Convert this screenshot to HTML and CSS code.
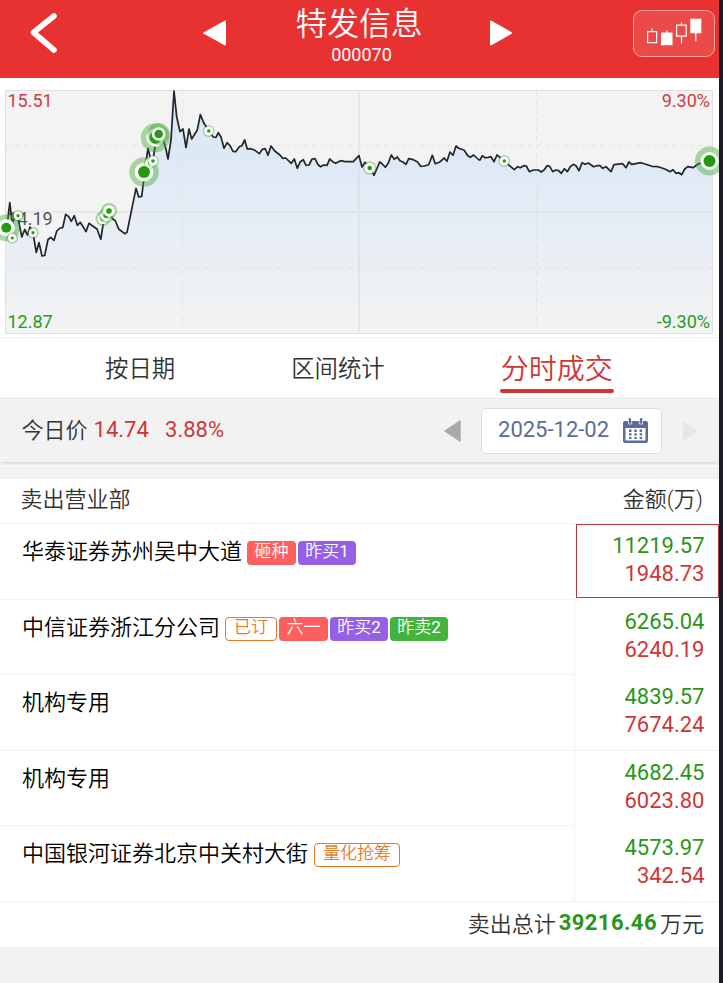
FILE: index.html
```html
<!DOCTYPE html>
<html lang="zh-CN">
<head>
<meta charset="utf-8">
<title>特发信息 000070</title>
<link rel="stylesheet" href="styles.css">
</head>
<body>
<div class="app">
  <header class="header">
    <svg class="back" width="32" height="46" viewBox="0 0 32 46"><path d="M27 6 6.500 22.500 27 40" fill="none" stroke="#fff" stroke-width="5.600" stroke-linecap="round" stroke-linejoin="round"/></svg>
    <svg class="prev" width="24" height="26" viewBox="0 0 24 26"><path d="M1.300 13 22 1.500v23z" fill="#fff" stroke="#fff" stroke-width="2" stroke-linejoin="round"/></svg>
    <div class="heading"><h1 class="title">特发信息</h1><div class="code">000070</div></div>
    <svg class="next" width="24" height="26" viewBox="0 0 24 26"><path d="M22 13 2 1.500v23z" fill="#fff" stroke="#fff" stroke-width="2" stroke-linejoin="round"/></svg>
    <div class="kline">
      <svg width="80" height="45" viewBox="1 1 80 45"><g fill="none" stroke="#fff" stroke-width="1.200"><path d="M14.600 22.600h9v11h-9zM19 19.500v3M33.800 21.500v3M43.600 16.100h9.600v11h-9.600zM48.500 13.500v2.600M48.500 27v7.500M62.800 23v9.300"/></g><path fill="#fff" d="M28 23.500h11.500v12.700H28zM57.300 9.700h11v14.500h-11z"/></svg>
    </div>
  </header>

  <section class="chart">
    <svg width="719" height="259" viewBox="0 78 719 259">
      <defs><linearGradient id="fill" x1="0" y1="91" x2="0" y2="333" gradientUnits="userSpaceOnUse"><stop offset="0" stop-color="#d6e5f5"/><stop offset=".4" stop-color="#e2ebf6"/><stop offset="1" stop-color="#f3f3f3"/></linearGradient></defs>
      <rect x="5.500" y="90.500" width="707" height="243" fill="#f3f3f3" stroke="#e0e0e0"/>
      <path id="area" fill="url(#fill)" d=""/>
      <g fill="none" stroke="#d2d6da" stroke-opacity=".5"><path stroke-width="2" stroke-opacity=".4" d="M6 212h706M359 91v242"/><path stroke-dasharray="4.500 4.500" d="M6 145.500h706M6 267.500h706M182.500 91v242M536.500 91v242"/></g>
      <g class="axis"><text x="7.500" y="107" fill="#cf3c3c">15.51</text><text x="7.500" y="225" fill="#555">14.19</text><text x="7.500" y="328" fill="#2b9a1a">12.87</text><text x="710" y="107" text-anchor="end" fill="#cf3c3c">9.30%</text><text x="710" y="328" text-anchor="end" fill="#2b9a1a">-9.30%</text></g>
      <path id="line" fill="none" stroke="#20262a" stroke-width="1.700" stroke-linejoin="round" d=""/>
      <g id="markers"></g>
    </svg>
  </section>

  <nav class="tabs"><a class="tab">按日期</a><a class="tab">区间统计</a><a class="tab active">分时成交</a></nav>

  <section class="pricebar">
    <span class="label">今日价</span><span class="price">14.74</span><span class="change">3.88%</span>
    <svg class="day-prev" width="18" height="24" viewBox="0 0 18 24"><path d="M1 12 16 2v20z" fill="#aaa" stroke="#aaa" stroke-width="1.500" stroke-linejoin="round"/></svg>
    <div class="date"><span>2025-12-02</span>
      <svg width="25" height="26" viewBox="0 0 25 26"><path fill="#5b6b9c" d="M2 3h3.500V1.200q0-1.200 1.300-1.200t1.300 1.200V3h8.800V1.200q0-1.200 1.300-1.200t1.300 1.200V3H23q2 0 2 2v18q0 2-2 2H2q-2 0-2-2V5q0-2 2-2z"/><path fill="#fff" d="M2.500 10h20v12.500h-20z"/><path d="M5.500 2v4h3.200V2M16.300 2v4h3.200V2" fill="none" stroke="#fff" stroke-width=".7"/><path fill="#5b6b9c" d="M6 11.500h2.500v2.500H6zM11.300 11.500h2.500v2.500h-2.500zM16.600 11.500h2.500v2.500h-2.500zM6 15.300h2.500v2.200H6zM11.300 15.300h2.500v2.200h-2.500zM16.600 15.300h2.500v2.200h-2.500zM6 18.900h2.500v2.200H6zM11.300 18.900h2.500v2.200h-2.500zM16.600 18.900h2.500v2.200h-2.500z"/></svg>
    </div>
    <svg class="day-next" width="18" height="24" viewBox="0 0 18 24"><path d="M17 12 2 2v20z" fill="#e6e6e6"/></svg>
  </section>
  <div class="divider"></div>

  <section class="table">
    <div class="thead"><span>卖出营业部</span><span>金额(万)</span></div>
    <div class="row"><div class="broker"><span>华泰证券苏州吴中大道</span><b class="tag red">砸种</b><b class="tag purple">昨买<i>1</i></b></div><div class="amount selected"><span class="sell">11219.57</span><span class="buy">1948.73</span></div></div>
    <div class="row"><div class="broker"><span>中信证券浙江分公司</span><b class="tag outline booked">已订</b><b class="tag red">六一</b><b class="tag purple">昨买<i>2</i></b><b class="tag green">昨卖<i>2</i></b></div><div class="amount"><span class="sell">6265.04</span><span class="buy">6240.19</span></div></div>
    <div class="row"><div class="broker"><span>机构专用</span></div><div class="amount ruled"><span class="sell">4839.57</span><span class="buy">7674.24</span></div></div>
    <div class="row"><div class="broker"><span>机构专用</span></div><div class="amount"><span class="sell">4682.45</span><span class="buy">6023.80</span></div></div>
    <div class="row"><div class="broker"><span>中国银河证券北京中关村大街</span><b class="tag outline strategy">量化抢筹</b></div><div class="amount ruled"><span class="sell">4573.97</span><span class="buy">342.54</span></div></div>
    <div class="total"><span>卖出总计</span><strong>39216.46</strong><span>万元</span></div>
  </section>
</div>
<script src="chart.js"></script>
</body>
</html>
```
FILE: styles.css
```css
* { box-sizing: border-box; }
body { margin: 0; background: #1b1b28; font-family: Roboto, "Noto Sans CJK SC", sans-serif; color: #333; }
.app { width: 719px; height: 983px; background: #f2f2f2; overflow: hidden; }
svg { display: block; flex: none; }
h1 { margin: 0; font-weight: 350; }

.header { height: 78px; background: #e83131; color: #fff; display: flex; align-items: flex-start; }
.back { margin: 10px 0 0 27px; }
.prev { margin: 19.500px 0 0 144px; }
.heading { width: 128px; margin-left: 68px; display: flex; flex-direction: column; align-items: center; }
.title { font-size: 31.800px; line-height: 46px; white-space: nowrap; padding-top: 1px; }
.code { font-size: 18px; line-height: 20px; margin: -2px 0 0 5px; }
.next { margin: 19.500px 0 0 66px; }
.kline { width: 82px; height: 47px; margin: 9.500px 0 0 120px; border: 1px solid #f5a5a5; border-radius: 9px; background: #ec4949; overflow: hidden; }
.kline svg { margin-top: -1px; }

.chart { height: 259px; background: #fff; }
.axis { font-size: 18px; }
.ring { fill: #3da72f; fill-opacity: .42; }
.disc { fill: #fff; }
.dot { fill: #249a0e; }

.tabs { height: 61px; background: #fff; border-top: 1px solid #f3f3f3; display: flex; align-items: flex-start; font-weight: 350; }
.tab { font-size: 23.400px; line-height: 34px; margin: 14px 0 0 105px; white-space: nowrap; }
.tab + .tab { margin-left: 116px; }
.tab.active { color: #d03535; font-size: 28px; line-height: 40px; height: 43px; width: 114px; padding-left: 1px; margin: 12px 0 0 115px; position: relative; }
.tab.active::after { content: ""; position: absolute; left: 0; right: 0; bottom: 0; height: 4px; border-radius: 2px; background: #d03535; }

.pricebar { height: 64px; background: #f2f2f2; border-top: 1px solid #e9e9e9; box-shadow: 0 2px 4px rgba(0,0,0,.18); display: flex; align-items: center; font-size: 22px; position: relative; }
.label { margin: 0 6px 0 21.500px; padding-bottom: 5px; font-weight: 350; }
.price, .change { color: #cf3535; padding-bottom: 3px; }
.price { width: 71.500px; }
.change { width: 60px; }
.day-prev { margin: 1px 0 0 219px; }
.date { width: 181px; height: 46px; margin: 0 0 0 19px; padding: 0 13px 0 16px; display: flex; align-items: center; justify-content: space-between; background: #fff; border: 1px solid #ddd; border-radius: 5px; color: #5b6b9c; }
.date span { padding-bottom: 3px; }
.day-next { margin: 1px 0 0 19px; }
.divider { height: 17px; background: #f2f2f2; border-top: 5px solid #fff; }

.table { height: 468px; background: #fff; font-size: 22px; }
.thead { height: 45px; padding: 0 16px 8px 20.500px; display: flex; justify-content: space-between; align-items: center; border-bottom: 1px solid #f2f2f2; font-weight: 350; }
.row { height: 75.600px; display: flex; }
.broker { width: 575px; padding: 15px 0 0 22px; display: flex; align-items: flex-start; border-right: 1px solid #f2f2f2; border-bottom: 1px solid #f2f2f2; color: #000; font-weight: 350; line-height: 26px; }
.broker > span { white-space: nowrap; margin-right: 5px; }
.tag { height: 24px; margin: 2px 2px 0 0; padding: 0 7.200px; border-radius: 4px; color: #fff; font-size: 17px; line-height: 20px; font-weight: 350; white-space: nowrap; }
.tag i { font-style: normal; font-weight: 400; }
.tag.red { padding: 0 7.500px; }
.red { background: #ff5f5f; }
.purple { background: #955fe6; }
.green { background: #42b43d; }
.outline { border: 1px solid #e77824; color: #e77824; line-height: 18px; }
.booked { padding: 0 8px; }
.strategy { margin-left: 1px; padding: 0 8px; }
.amount { width: 144px; padding: 8px 14.500px 0 0; display: flex; flex-direction: column; text-align: right; line-height: 28px; }
.amount.ruled { border-bottom: 1px solid #f2f2f2; }
.amount.selected { width: 143px; height: 74px; margin-left: 1px; padding: 7px 13.500px 0 0; border: 1px solid #b73a3a; }
.sell { color: #2a951a; }
.buy { color: #cd3737; }
.total { height: 45px; padding: 0 15px 5px 0; display: flex; align-items: center; justify-content: flex-end; font-weight: 350; }
.total strong { color: #2a951a; font-weight: 700; letter-spacing: .450px; margin: 2px 3px 0; }
```
FILE: chart.js
```js
const points = `6,227.7 8,218 9.8,202.5 12,222 17,215 19,223 21.8,237 24.7,229.5 27.5,235 30,227 33,233 34.5,242 36.3,252.5 39,242.5 42,256 44.7,255.5 48,239.5 50.8,237.5 54,240.3 56.8,231 60,228 62.7,227.6 65.7,214.3 68.7,216.7 71.3,221.3 74.3,215.7 77.3,225.3 80.3,222.3 86,231.6 89,223.3 92.3,225.7 97,229 100.8,239.3 103.3,223 109,211 112.7,219 115.3,220.7 118.7,229 124.7,233.7 127,232.3 136,188.3 138.7,197 141.7,196.3 144,178 145.5,165 148,148.3 150.7,160 153.3,158 155.3,145 158.7,134 163.3,140 165.7,148 168,159 171,140 174,91 176.7,116.7 180,131.7 183,129 186,147.7 189,129 191.7,139 197.3,130 200.3,114.7 203.7,122.7 208.7,131 213.3,137 216,137.3 218.3,132.7 221,137 224,148.3 227,142.7 230,145.7 233,151.3 235.7,151.7 239.7,146.3 241.7,146 244.7,140 247.3,149 250.7,148.7 255,150.3 259.3,153.7 262.3,149.3 265.3,148.7 268,155.3 271,146 274.7,151 279.7,154.7 282.7,158.3 285.7,158 291.3,163.3 294.3,159 297.3,168.3 300.3,161.7 303.3,159.7 306,165.3 309,165 312,159 315,158.7 318,164.7 320.7,166.7 323.7,165 327,165.3 329.7,159 332.7,161.7 335.7,163.3 340.7,160.7 345,161.7 353.3,161.7 359,155.7 362,167 365,162.3 369.7,168 374,175.3 379.7,162 382.3,164 385.3,167.3 388.3,163 391.3,155 394.3,159.3 397.3,157 400,160.7 403,162 406,164.3 408.7,158.7 413.3,159.7 417.3,161.7 420.7,166.3 424.3,166 428.7,164.7 432.3,155.3 435.3,163.7 439.3,162.3 444.3,158 447,161.3 450,152 453,155.3 456,146 458.7,148.3 464.3,150.3 467.7,155.7 470.3,157.3 473.7,155 479,160 480,160 482.3,155.7 484.7,157.7 488.3,157.3 491,156.7 494,161.7 497,155 500,157.3 504.3,161 508,164.3 514.3,169.7 517.7,166.7 520.3,167.7 523.7,165.7 526.3,166 529.3,171.7 533.3,170 538.3,170 541.3,172 544.3,169.7 547,165.7 549.7,166.3 552.7,171.7 555.7,170 558.7,170.7 561.3,173.3 564.3,168.7 567.3,171.7 570.3,166.7 573.3,164.3 576,165.7 579,170.7 582,162.7 585,164.3 588.3,163 593.7,166.7 597,165.7 600,165.7 602.7,168.3 606,166.7 611,171.7 614,164.7 622.7,163.7 626,167.7 629,162 631.7,164.3 641,162.7 652,166.3 658,166.7 665,169 670,171.7 673,169.7 676,173.3 679,172.7 681.7,174.7 684.7,169 687.7,166.7 693.3,167.7 698,164 709.3,161`;
document.getElementById("line").setAttribute("d", "M" + points);
document.getElementById("area").setAttribute("d", "M6,333 L" + points + " 712,161 712,333z");

// x, y, ring radius, disc radius, dot radius
const markers = [
  [6.3, 227.700, 13.500, 8.500, 5],
  [18, 215.700, 5.800, 4.300, 1.600],
  [12.300, 238, 5.800, 4.300, 1.600],
  [33, 232.700, 5.800, 4.300, 1.600],
  [103, 218.500, 7.500, 5.500, 2.500],
  [106, 215.500, 7.500, 5.500, 2.500],
  [109, 211, 8, 5.800, 2.800],
  [144, 172, 14.700, 9.300, 6],
  [150, 163, 6, 4.800, 2],
  [153, 161, 6, 4.800, 1.800],
  [155.300, 137.700, 14.500, 9, 6],
  [158.700, 134, 11, 6.800, 4.300],
  [208.700, 131, 5.900, 4.600, 1.700],
  [369.700, 168, 6.800, 5.200, 2.300],
  [504.300, 161, 5.900, 4.600, 1.700],
  [709.500, 161, 14.500, 9, 6]
];
document.getElementById("markers").innerHTML = markers.map(([x, y, ring, disc, dot]) =>
  [["ring", ring], ["disc", disc], ["dot", dot]].map(([name, r]) => `<circle class="${name}" cx="${x}" cy="${y}" r="${r}"/>`).join("")
).join("");
```
